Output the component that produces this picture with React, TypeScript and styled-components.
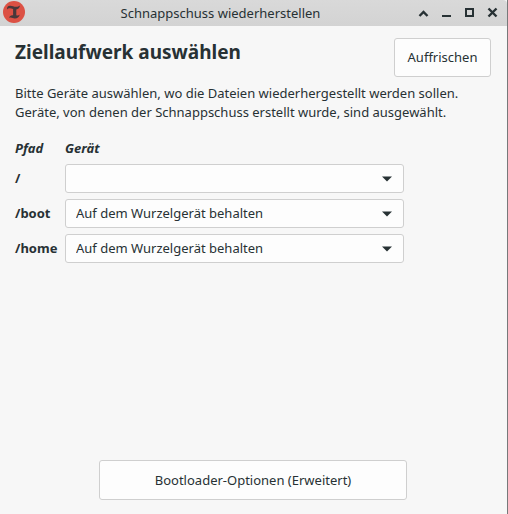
import React from "react";
import styled, { createGlobalStyle } from "styled-components";

const GlobalStyle = createGlobalStyle`
  * {
    box-sizing: border-box;
  }
  body {
    margin: 0;
    background: #f7f7f7;
    color: #273134;
    font-family: "Noto Sans", sans-serif;
    font-size: 13px;
    line-height: 19px;
  }
`;

const Window = styled.div`
  display: flex;
  flex-direction: column;
  min-height: 100vh;
  border-right: 1px solid #77797a;
`;

const TitleBar = styled.header`
  display: grid;
  grid-template-columns: 26px 1fr auto;
  align-items: center;
  height: 26px;
  background: linear-gradient(#d9d9d9, #d3d3d3);
  border-top-right-radius: 4px;
`;

const AppLogo = styled.svg`
  display: block;
  width: 24px;
  height: 24px;
  margin-left: 2px;
`;

const WindowTitle = styled.div`
  text-align: center;
  white-space: nowrap;
`;

const WindowControls = styled.div`
  display: flex;
  justify-content: flex-end;
  gap: 7px;
  padding-right: 7px;
`;

const ControlButton = styled.button`
  width: 16px;
  height: 16px;
  padding: 0;
  border: 0;
  background: none;
  color: inherit;

  svg {
    display: block;
  }
`;

const Content = styled.main`
  display: flex;
  flex: 1;
  flex-direction: column;
  padding: 12px 16px 14px 15px;
`;

const Heading = styled.div`
  display: flex;
  justify-content: space-between;
  align-items: flex-start;
`;

const PageTitle = styled.h1`
  margin: 0;
  font-size: 19px;
  line-height: 28px;
  font-weight: 700;
`;

const Button = styled.button<{ $wide?: boolean }>`
  min-width: ${({ $wide }) => ($wide ? "308px" : "97px")};
  height: ${({ $wide }) => ($wide ? "40px" : "39px")};
  padding: 0 12px;
  border: 1px solid #cfcfcf;
  border-radius: 3px;
  background: #fdfdfd;
  color: inherit;
  font: inherit;
  white-space: nowrap;
`;

const Description = styled.p`
  margin: 7px 0 17px;
`;

const DeviceGrid = styled.div`
  display: grid;
  grid-template-columns: 44px minmax(0, 339px);
  column-gap: 6px;
  row-gap: 6px;
  align-items: center;
`;

const ColumnTitle = styled.div`
  font-weight: 700;
  font-style: italic;
`;

const PathLabel = styled.label`
  font-weight: 700;
`;

const SelectBox = styled.div`
  display: grid;
  align-items: center;

  > * {
    grid-area: 1 / 1;
  }
`;

const Select = styled.select`
  appearance: none;
  width: 100%;
  height: 29px;
  padding: 0 32px 0 10px;
  border: 1px solid #cfcfcf;
  border-radius: 3px;
  background: #fdfdfd;
  color: inherit;
  font: inherit;
`;

const Arrow = styled.svg`
  justify-self: end;
  margin-right: 12px;
  pointer-events: none;
`;

const Footer = styled.footer`
  display: flex;
  justify-content: center;
  margin-top: auto;
`;

const KEEP_ON_ROOT = "Auf dem Wurzelgerät behalten";

const mounts = [
  { path: "/", device: "" },
  { path: "/boot", device: KEEP_ON_ROOT },
  { path: "/home", device: KEEP_ON_ROOT },
];

const controls = [
  { name: "Einrollen", drawing: <path d="M4.500 11 8.500 7l4 4" strokeWidth="2.400" /> },
  { name: "Minimieren", drawing: <path d="M4 11h9" strokeWidth="2" /> },
  { name: "Maximieren", drawing: <path d="M5 4h7v7H5z" strokeWidth="2" /> },
  { name: "Schließen", drawing: <path d="m4.500 3.500 8 8m0-8-8 8" strokeWidth="2.400" /> },
];

export default function App() {
  return (
    <>
      <GlobalStyle />
      <Window>
        <TitleBar>
          <AppLogo viewBox="0 0 24 24" aria-hidden="true">
            <circle cx="12" cy="11" r="11" fill="#dc5144" />
            <path
              d="M5.200 8.600C4.600 6.200 6 4.600 8.400 4.800c2.300.2 3.800 1.200 6 1 1.300-.1 2.200-.5 3.600-1.300-.3 2.400-1.600 3.700-3.700 3.900v5.300c0 .6.500 1 1.200.9.900-.1 1.600-.5 2.300-1.100-.7 2.500-2.600 4.100-5.100 4-2.200-.1-3.200-1.500-5.600-.6.500-1.900 1.900-2.900 4-2.600V8C9 7.500 6.500 6.600 5.200 8.600z"
              fill="#48383b"
            />
          </AppLogo>
          <WindowTitle>Schnappschuss wiederherstellen</WindowTitle>
          <WindowControls>
            {controls.map(({ name, drawing }) => (
              <ControlButton key={name} type="button" aria-label={name}>
                <svg width="16" height="16" fill="none" stroke="currentColor">
                  {drawing}
                </svg>
              </ControlButton>
            ))}
          </WindowControls>
        </TitleBar>
        <Content>
          <Heading>
            <PageTitle>Ziellaufwerk auswählen</PageTitle>
            <Button type="button">Auffrischen</Button>
          </Heading>
          <Description>
            Bitte Geräte auswählen, wo die Dateien wiederhergestellt werden sollen.
            <br />
            Geräte, von denen der Schnappschuss erstellt wurde, sind ausgewählt.
          </Description>
          <DeviceGrid>
            <ColumnTitle>Pfad</ColumnTitle>
            <ColumnTitle>Gerät</ColumnTitle>
            {mounts.map(({ path, device }) => (
              <React.Fragment key={path}>
                <PathLabel htmlFor={`device-${path}`}>{path}</PathLabel>
                <SelectBox>
                  <Select id={`device-${path}`} defaultValue={device}>
                    <option>{device}</option>
                  </Select>
                  <Arrow width="10" height="6" aria-hidden="true">
                    <path d="M0 .5h10L5 5.500z" fill="#273134" />
                  </Arrow>
                </SelectBox>
              </React.Fragment>
            ))}
          </DeviceGrid>
          <Footer>
            <Button type="button" $wide>
              Bootloader-Optionen (Erweitert)
            </Button>
          </Footer>
        </Content>
      </Window>
    </>
  );
}
